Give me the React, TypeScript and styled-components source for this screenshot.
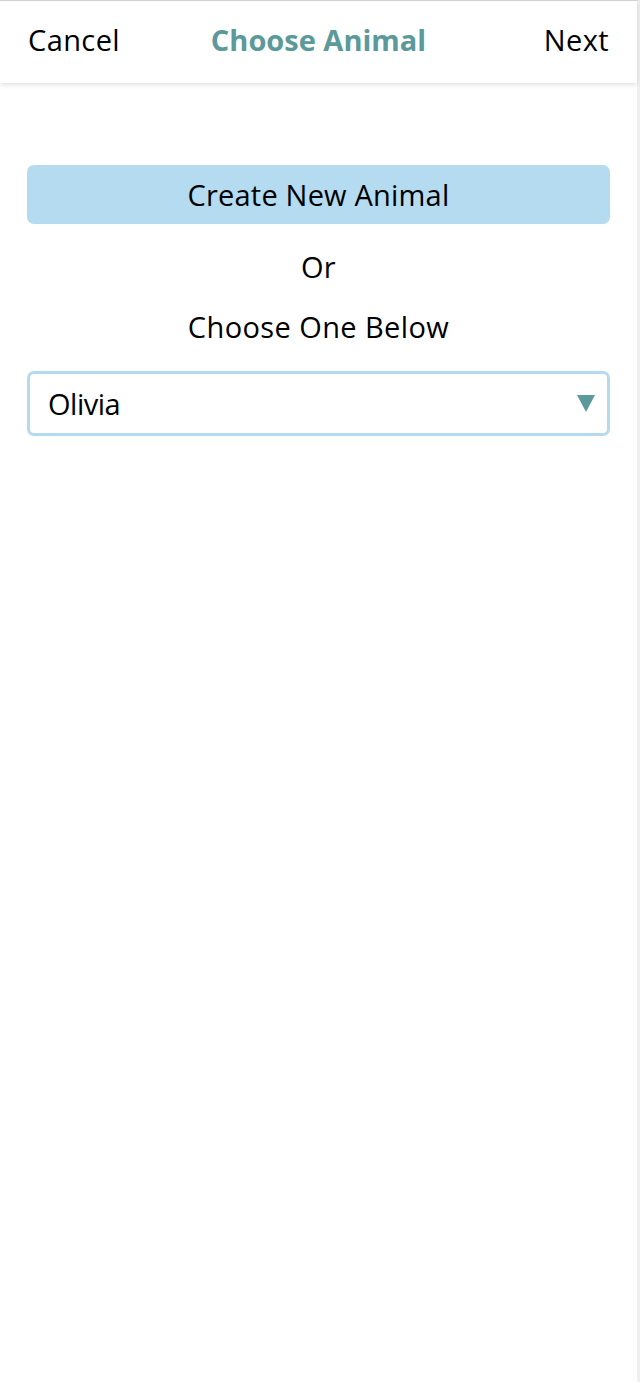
import React, { useState } from "react";
import styled, { createGlobalStyle } from "styled-components";

const GlobalStyle = createGlobalStyle`
	html, body {
		margin: 0;
		padding: 0;
		background: #ffffff;
	}
	body {
		font-family: "Open Sans", "Liberation Sans", sans-serif;
		color: #000000;
	}
`;

const Page = styled.div`
	min-height: 1382px;
	width: 640px;
	border-right: 3px solid #efefef;
	border-top: 1px solid #d6d6d6;
	box-sizing: border-box;
	background: #ffffff;
`;

const Header = styled.header`
	display: grid;
	grid-template-columns: 1fr auto 1fr;
	align-items: center;
	height: 82px;
	padding: 0 28px 5px;
	background: #ffffff;
	box-shadow: 0 2px 5px rgba(0, 0, 0, 0.12);
	box-sizing: border-box;
`;

const HeaderLink = styled.span<{ $align: "left" | "right" }>`
	justify-self: ${(p) => (p.$align === "left" ? "start" : "end")};
	font-size: 29px;
	font-weight: 400;
	letter-spacing: 0.4px;
	color: #000000;
	cursor: pointer;
`;

const Title = styled.h1`
	margin: 0;
	font-size: 29px;
	font-weight: 700;
	color: #5b999b;
`;

const Content = styled.main`
	display: flex;
	flex-direction: column;
	align-items: stretch;
	padding: 82px 27px 0 27px;
`;

const PrimaryButton = styled.button`
	height: 59px;
	border: none;
	border-radius: 7px;
	background: #b4dbef;
	font-family: inherit;
	font-size: 29px;
	letter-spacing: 0.2px;
	color: #000000;
	cursor: pointer;
`;

const Caption = styled.p<{ $top: number }>`
	margin: 0;
	margin-top: ${(p) => p.$top}px;
	text-align: center;
	font-size: 29px;
	line-height: 34px;
	letter-spacing: 0.4px;
`;

const SelectBox = styled.div`
	position: relative;
	display: flex;
	align-items: center;
	height: 65px;
	margin-top: 27px;
	padding: 0 18px;
	border: 3px solid #b3daee;
	border-radius: 7px;
	box-sizing: border-box;
	font-size: 29px;
	letter-spacing: -0.5px;
`;

const Arrow = styled.svg`
	position: absolute;
	right: 12px;
	top: 21px;
`;

const App = () => {
	const [animal] = useState("Olivia");
	return (
		<>
			<GlobalStyle />
			<Page>
				<Header>
					<HeaderLink $align='left'>Cancel</HeaderLink>
					<Title>Choose Animal</Title>
					<HeaderLink $align='right'>Next</HeaderLink>
				</Header>
				<Content>
					<PrimaryButton type='button'>Create New Animal</PrimaryButton>
					<Caption $top={26}>Or</Caption>
					<Caption $top={26}>Choose One Below</Caption>
					<SelectBox>
						{animal}
						<Arrow width='18' height='17' viewBox='0 0 18 17'>
							<polygon points='0,0 18,0 9,17' fill='#5b999b' />
						</Arrow>
					</SelectBox>
				</Content>
			</Page>
		</>
	);
};

export default App;
